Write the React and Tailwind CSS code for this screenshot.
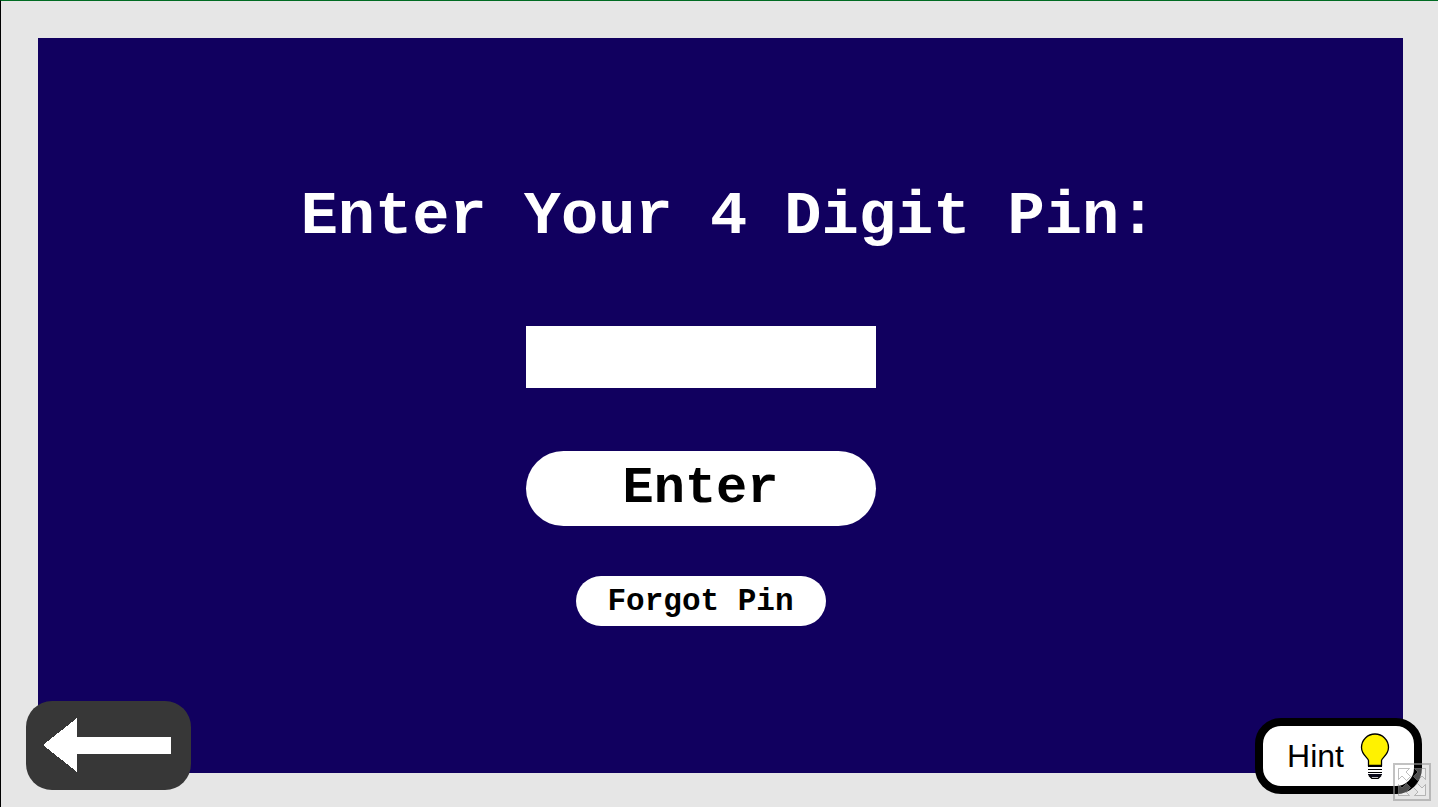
import React, { useState } from 'react'

const BackArrow = () => (
  <svg width="128" height="54" viewBox="0 0 128 54" fill="#fff" shapeRendering="crispEdges" aria-hidden="true">
    <path d="M0 27 34 0v19h94v17H34v18z" />
  </svg>
)

const Bulb = () => (
  <svg width="30" height="46" viewBox="0 0 30 46" aria-hidden="true">
    <path
      d="M8.500 32.500V27.500C8.500 25 1.500 22 1.500 14.500a13.500 13.500 0 0 1 27 0c0 7.500-7 10.500-7 13v5z"
      fill="#fff200"
      stroke="#000"
      strokeWidth="1.300"
    />
    <path d="M8 33h14v8l-3 3-2 2h-4l-2-2-3-3z" fill="#fff" />
    <path d="M8 33.500h14M8 36.500h14M8 39.500h14" stroke="#000" strokeWidth="1.200" />
    <path d="M8 41h14v1l-3 2H11l-3-2z" fill="#0c0c1c" />
    <path d="M9 42.500l3 3h6l3-3" fill="none" stroke="#000" strokeWidth="1.300" />
  </svg>
)

const Expand = () => (
  <svg width="38" height="38" viewBox="0 0 38 38" aria-hidden="true">
    <rect x="1" y="1" width="36" height="36" fill="none" stroke="#999" strokeWidth="2" strokeOpacity="0.6" />
    <g fill="#fff" fillOpacity="0.3" stroke="#888" strokeOpacity="0.55">
      <path d="M5.500 5.500h11l-3.500 3.500 4.500 4.500-4 4L9 13l-3.500 3.500z" />
      <path d="M32.500 5.500h-11L25 9l-4.500 4.500 4 4L29 13l3.500 3.500z" />
      <path d="M5.500 32.500h11L13 29l4.500-4.500-4-4L9 25l-3.500-3.500z" />
      <path d="M32.500 32.500h-11L25 29l-4.500-4.500 4-4L29 25l3.500-3.500z" />
    </g>
  </svg>
)

const App = () => {
  const [pin, setPin] = useState('')

  return (
    <main className="relative min-h-screen flex flex-col bg-[#e6e6e6] border-t border-l border-t-[#006b22] border-l-black pt-[37px] pl-[37px] pr-[35px] pb-[34px]">
      <form
        onSubmit={(e) => e.preventDefault()}
        className="flex-1 flex flex-col items-center bg-[#11005f] pt-[148px] pb-16 font-bold font-['Liberation_Mono',monospace]"
      >
        <label htmlFor="pin" className="pl-4 text-[62px] leading-[62px] text-white whitespace-nowrap">
          Enter Your 4 Digit Pin:
        </label>

        <div className="flex flex-col items-center pt-[78px] pr-10">
          <input
            id="pin"
            type="text"
            inputMode="numeric"
            maxLength={4}
            value={pin}
            onChange={(e) => setPin(e.target.value)}
            className="w-[350px] h-[62px] bg-white text-black text-center text-[52px] outline-none"
          />
          <button type="submit" className="mt-[63px] w-[350px] h-[75px] rounded-full bg-white text-black text-[52px] leading-[52px]">
            Enter
          </button>
          <button type="button" className="mt-[50px] w-[250px] h-[50px] rounded-full bg-white text-black text-[31px] leading-[31px]">
            Forgot Pin
          </button>
        </div>
      </form>

      {/* Back */}
      <button
        type="button"
        aria-label="Back"
        className="absolute left-[25px] bottom-[17px] w-[165px] h-[89px] pl-[17px] pb-[2px] flex items-center rounded-[26px] bg-[#373737]"
      >
        <BackArrow />
      </button>

      {/* Hint */}
      <button
        type="button"
        className="absolute right-4 bottom-[13px] w-[167px] h-[76px] flex items-center justify-center gap-4 rounded-[26px] border-8 border-black bg-white text-black text-[32px] leading-[32px] font-['Liberation_Sans',sans-serif]"
      >
        Hint
        <Bulb />
      </button>

      {/* Fullscreen */}
      <button type="button" aria-label="Fullscreen" className="absolute right-[7px] bottom-[6px]">
        <Expand />
      </button>
    </main>
  )
}

export default App
